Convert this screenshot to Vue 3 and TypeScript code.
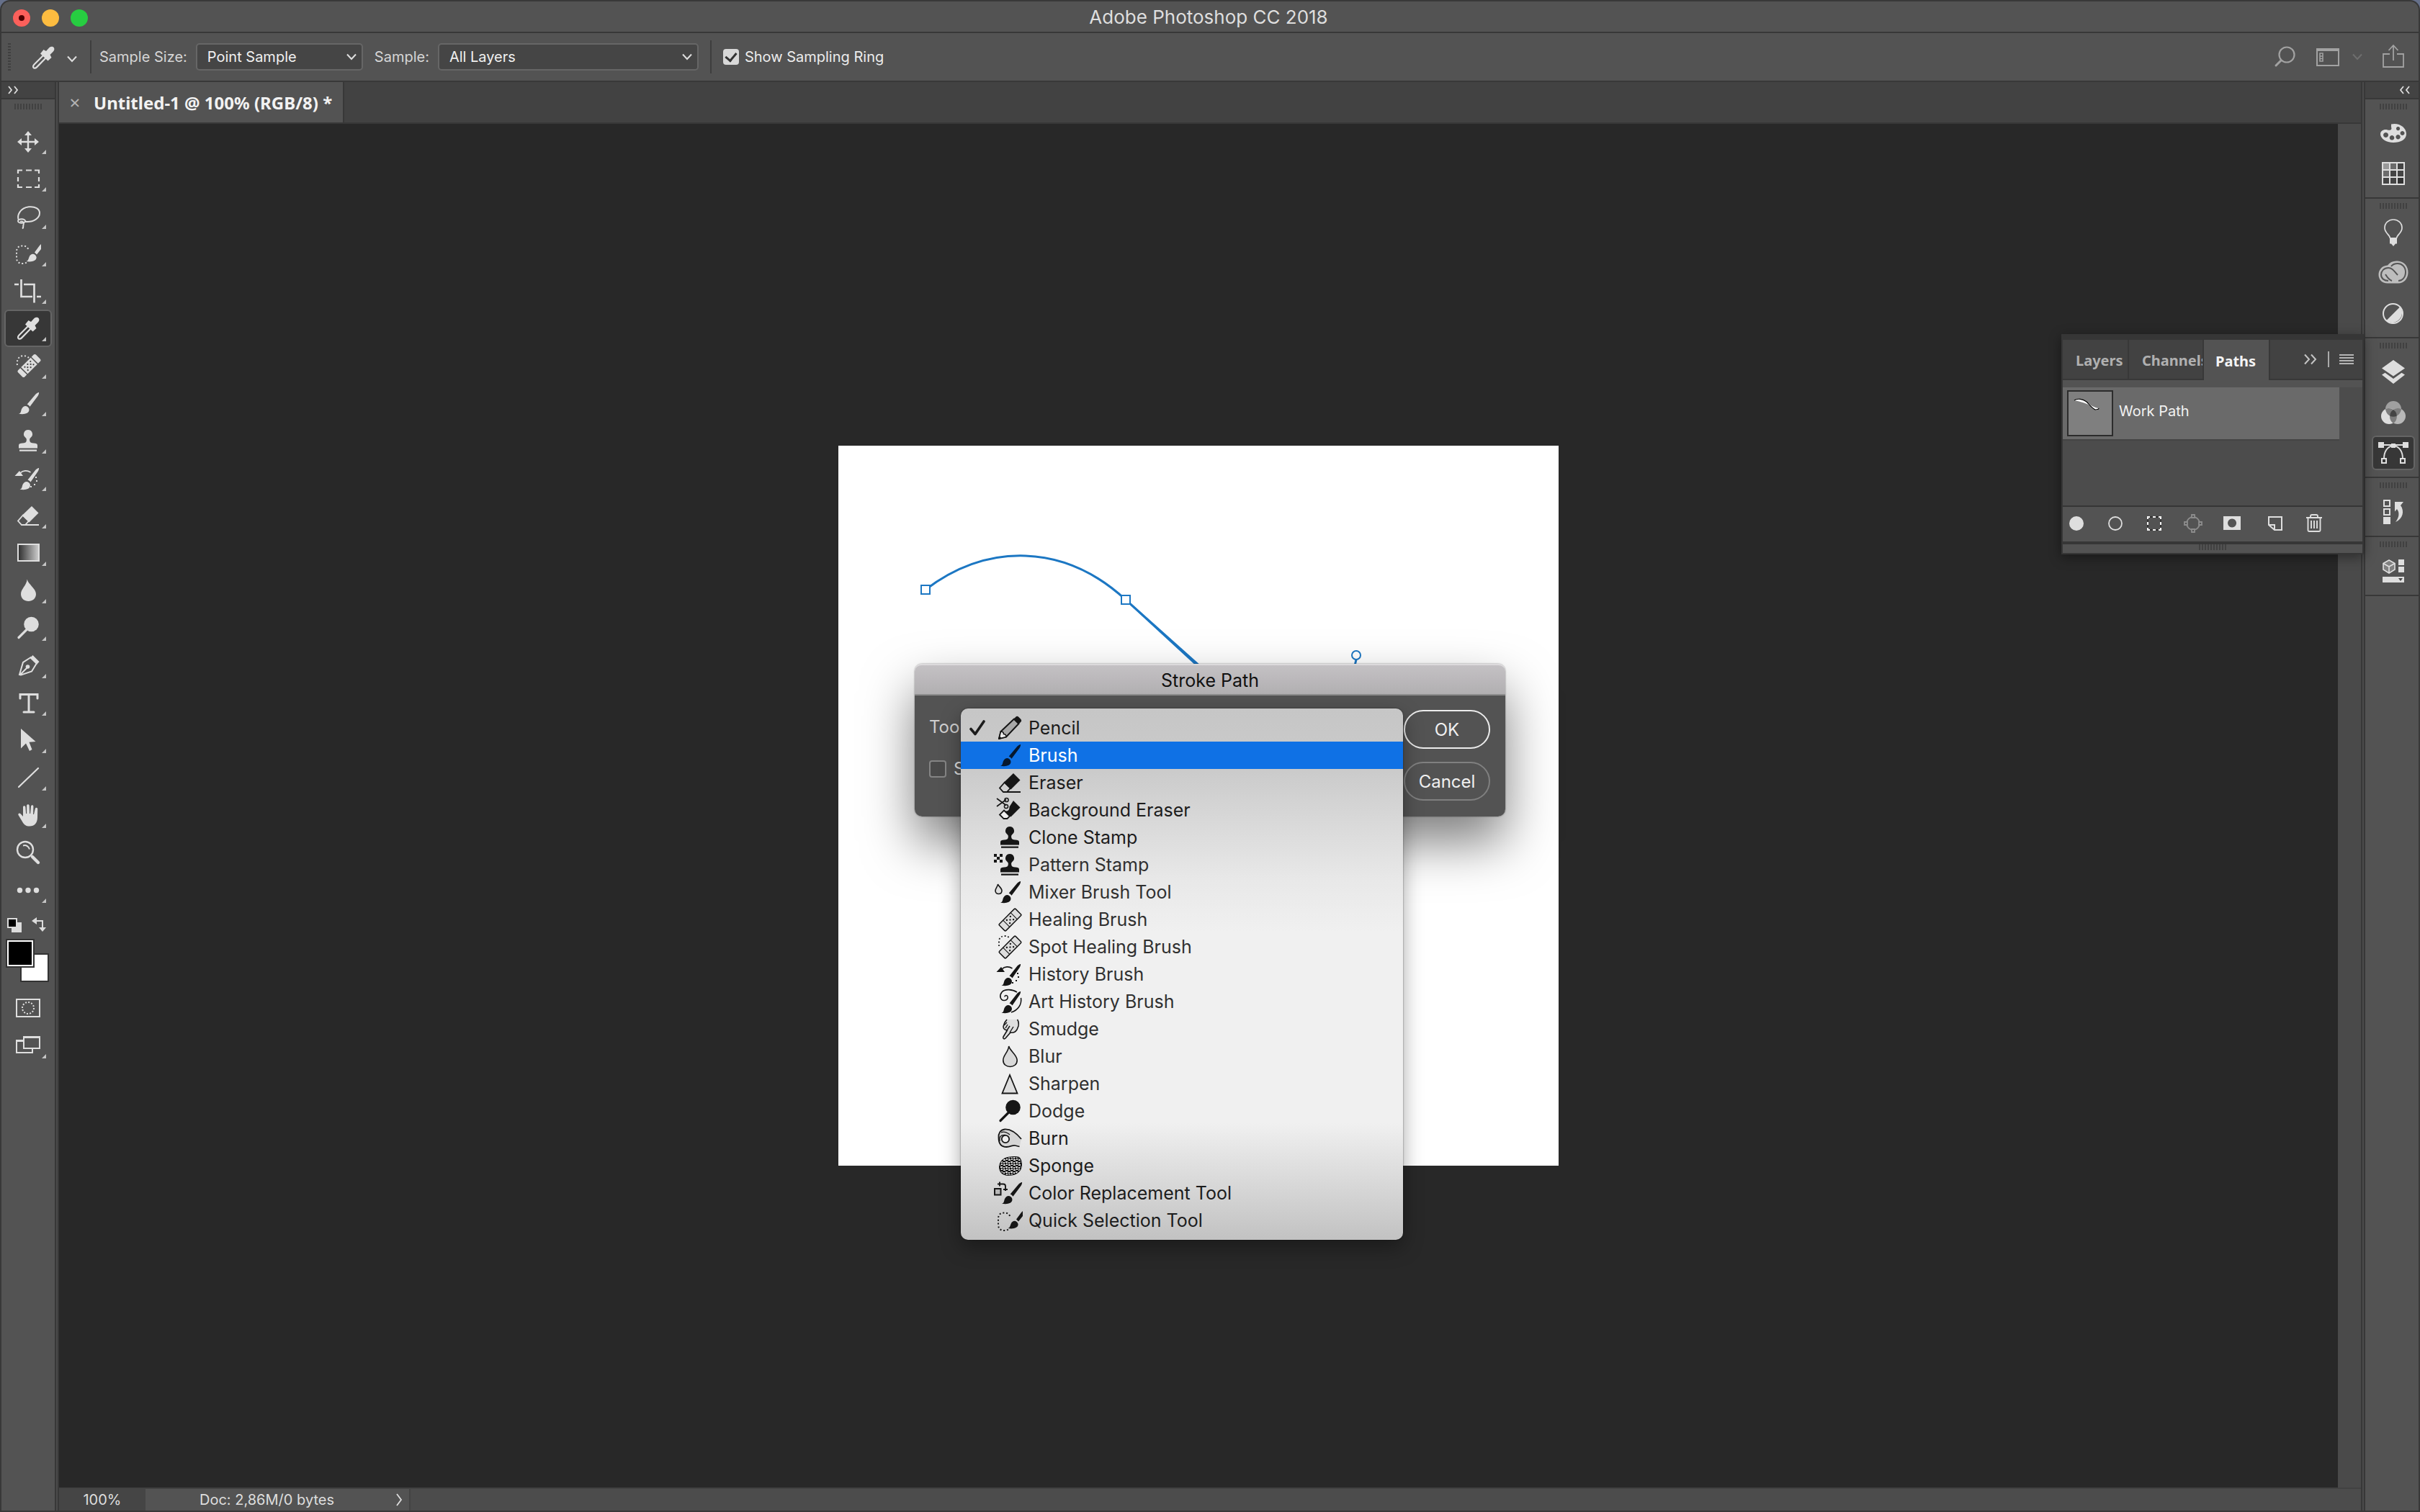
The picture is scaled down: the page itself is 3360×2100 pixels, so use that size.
<script setup lang="ts">
import { ref } from 'vue'

interface Tool {
  icon: string
  label: string
  more: boolean
}

interface StrokeTool {
  icon: string
  label: string
}

const tools: Tool[] = [
  { icon: 'move', label: 'Move', more: true },
  { icon: 'marquee', label: 'Rectangular Marquee', more: true },
  { icon: 'lasso', label: 'Lasso', more: true },
  { icon: 'quick', label: 'Quick Selection', more: true },
  { icon: 'crop', label: 'Crop', more: true },
  { icon: 'eyedropper', label: 'Eyedropper', more: true },
  { icon: 'spot-heal-solid', label: 'Spot Healing Brush', more: true },
  { icon: 'brush', label: 'Brush', more: true },
  { icon: 'stamp', label: 'Clone Stamp', more: true },
  { icon: 'history-brush', label: 'History Brush', more: true },
  { icon: 'eraser', label: 'Eraser', more: true },
  { icon: 'gradient', label: 'Gradient', more: true },
  { icon: 'drop-solid', label: 'Blur', more: true },
  { icon: 'dodge', label: 'Dodge', more: true },
  { icon: 'pen', label: 'Pen', more: true },
  { icon: 'type', label: 'Horizontal Type', more: true },
  { icon: 'arrow', label: 'Path Selection', more: true },
  { icon: 'line', label: 'Line', more: true },
  { icon: 'hand', label: 'Hand', more: true },
  { icon: 'zoom', label: 'Zoom', more: false },
  { icon: 'dots', label: 'Edit Toolbar', more: true },
]

const strokeTools: StrokeTool[] = [
  { icon: 'pencil', label: 'Pencil' },
  { icon: 'brush', label: 'Brush' },
  { icon: 'eraser', label: 'Eraser' },
  { icon: 'bg-eraser', label: 'Background Eraser' },
  { icon: 'stamp', label: 'Clone Stamp' },
  { icon: 'pattern-stamp', label: 'Pattern Stamp' },
  { icon: 'mixer', label: 'Mixer Brush Tool' },
  { icon: 'heal', label: 'Healing Brush' },
  { icon: 'spot-heal', label: 'Spot Healing Brush' },
  { icon: 'history-brush', label: 'History Brush' },
  { icon: 'art-history', label: 'Art History Brush' },
  { icon: 'smudge', label: 'Smudge' },
  { icon: 'drop-outline', label: 'Blur' },
  { icon: 'sharpen', label: 'Sharpen' },
  { icon: 'dodge', label: 'Dodge' },
  { icon: 'burn', label: 'Burn' },
  { icon: 'sponge', label: 'Sponge' },
  { icon: 'color-replace', label: 'Color Replacement Tool' },
  { icon: 'quick', label: 'Quick Selection Tool' },
]

const dockGroups: string[][] = [
  ['palette', 'swatches'],
  ['bulb', 'cloud', 'adjust'],
  ['layers', 'channels', 'paths'],
  ['history'],
  ['properties'],
]

const footerIcons = ['fill', 'stroke', 'selection', 'work-path', 'mask', 'new', 'trash']

const activeTool = ref('eyedropper')
const activeDock = ref('paths')
const sampleSize = ref('Point Sample')
const sampleFrom = ref('All Layers')
const showRing = ref(true)
const simulate = ref(false)
const checkedTool = ref('Pencil')
const hoveredTool = ref('Brush')
</script>

<template>
  <svg class="defs" aria-hidden="true">
    <defs>
      <linearGradient id="g-tool"><stop offset="0" stop-color="#2c2c2c" /><stop offset="1" stop-color="#cfcfcf" /></linearGradient>
      <pattern id="p-sponge" width="7" height="7" patternUnits="userSpaceOnUse">
        <path d="M0 0h3v2H0zM4 1h2v2H4zM1 3h2v2H1zM4 4h3v2H4z" fill="#dcdcdc" />
      </pattern>
    </defs>
    <symbol id="move" viewBox="0 0 40 40">
      <path d="M20 10v22M9 21h22" stroke="currentColor" stroke-width="2.400" />
      <path d="M20 6l5 6H15zM20 36l5-6H15zM5 21l6-5v10zM35 21l-6-5v10z" fill="currentColor" />
    </symbol>
    <symbol id="marquee" viewBox="0 0 40 40">
      <path d="M6 13V8.500h6M17 8.500h8M29 8.500h6V13M35 18v6M35 28v4h-6M25 32h-8M12 32H6v-4M6 24v-6" fill="none" stroke="currentColor" stroke-width="2.200" />
    </symbol>
    <symbol id="lasso" viewBox="0 0 40 40">
      <g fill="none" stroke="currentColor" stroke-width="2">
        <path d="M7 26C4 19 9 9 21 7.300c9-1 15 3 15 8.700 0 7-8 12-17 12-2 0-3-.2-4-.5" />
        <ellipse cx="11" cy="27" rx="5" ry="2.800" />
        <path d="M9 28c4-2 6 2 4.500 4.500-1 2 1 3-1.500 5" />
      </g>
    </symbol>
    <symbol id="quick" viewBox="0 0 40 40">
      <path d="M20 14C19 10 15 9.500 12 9.500 6 9.500 4 13 4 18v8c0 5 3 8 8 8 3 0 6-1 8-3" fill="none" stroke="currentColor" stroke-width="2" stroke-dasharray="2 2.800" />
      <path d="M17.500 31c3-1 3-4 4.200-6.500 1.800-3.800 5.300-4.600 8-2.500 2.800 2.200 2.500 6-.7 7.800-3 1.700-7 1.900-11.500 1.200zM29 18.500L36 9l2-2v7l-6 7.500z" fill="currentColor" />
    </symbol>
    <symbol id="crop" viewBox="0 0 40 40">
      <path d="M1 11h6M10.500 4v24H26M32 28h6M14 11h14.500v25.500" fill="none" stroke="currentColor" stroke-width="2.700" />
    </symbol>
    <symbol id="eyedropper" viewBox="0 0 40 40">
      <path d="M20.500 16.500L7.500 29.500c-1.500 1.500-2 3.500-.8 4.600 1.200 1 3 .5 4.500-1L24 20" fill="none" stroke="currentColor" stroke-width="2.200" />
      <path d="M16 14.500l4.500-5.500 3.500 2 4.500-5C31 4 34 4.500 35 6.500c1 2 0 4-1.500 5.500L29.500 16l2 4-5 4.500z" fill="currentColor" />
    </symbol>
    <symbol id="spot-heal-solid" viewBox="0 0 40 40">
      <path d="M5 19c-1-6 1-12 8-13 3 0 6 1 8 3" fill="none" stroke="currentColor" stroke-width="2" stroke-dasharray="2 2.800" />
      <g transform="rotate(-45 21.500 20)">
        <path d="M10.500 13.500H6.500a2.500 2.500 0 0 0-2.500 2.500v8a2.500 2.500 0 0 0 2.500 2.500h4zM32.500 13.500h4a2.500 2.500 0 0 1 2.500 2.500v8a2.500 2.500 0 0 1-2.500 2.500h-4zM12 13.500h19v13H12z" fill="currentColor" />
        <g fill="#444"><circle cx="16" cy="17" r="1.100" /><circle cx="21.500" cy="17" r="1.100" /><circle cx="27" cy="17" r="1.100" /><circle cx="18.500" cy="20" r="1.100" /><circle cx="24.500" cy="20" r="1.100" /><circle cx="16" cy="23" r="1.100" /><circle cx="21.500" cy="23" r="1.100" /><circle cx="27" cy="23" r="1.100" /></g>
      </g>
    </symbol>
    <symbol id="brush" viewBox="0 0 40 40">
      <path d="M7 34.800c3.500-1 2.800-4 4.200-7 1.800-4 5.500-5 8.300-2.600 3 2.500 2.500 6.600-1 8.600-3 1.600-7 1.500-11.500 1zM18.700 21.500L30.500 7.500C32.500 5.500 34.500 4.600 35 5c.4.500-.2 3-1.500 5L22.500 24.800c-1-1.500-2.300-2.600-3.800-3.300z" fill="currentColor" />
    </symbol>
    <symbol id="stamp" viewBox="0 0 40 40">
      <path d="M20 5a6 6 0 0 1 3.600 10.800c-1.400 1.200-1.600 2.200-1.400 4 .1 2 1.300 3.200 3.300 3.400l4.500.6c2.400.4 3 1.500 3 3.200v3.500H7V27c0-1.700.6-2.800 3-3.200l4.500-.6c2-.2 3.200-1.400 3.300-3.400.2-1.800 0-2.800-1.400-4A6 6 0 0 1 20 5zM8 32.600h24v2.200H8z" fill="currentColor" />
    </symbol>
    <symbol id="history-brush" viewBox="0 0 40 40">
      <path d="M8.500 35.800c3.500-1 2.800-4 4.200-7 1.800-4 5.500-5 8.300-2.600 3 2.500 2.500 6.600-1 8.600-3 1.600-7 1.500-11.500 1zM19.500 22.500L30.500 8.500C32.500 6.500 34.500 5.600 35 6c.4.500-.2 3-1.500 5L23.500 25.500c-1-1.500-2.300-2.300-4-3zM1.500 17L8 10l5 7z" fill="currentColor" />
      <path d="M9 13c4-4 10-4 14.500-1" fill="none" stroke="currentColor" stroke-width="1.600" />
      <path d="M32 18v2h-2v-2zM33 23v2h-2v-2zM30 28v2h-2v-2zM25 31v2h-2v-2z" fill="currentColor" />
    </symbol>
    <symbol id="eraser" viewBox="0 0 40 40">
      <path d="M25 7l9.500 9.500-13 13-10-9.500z" fill="currentColor" />
      <path d="M13 19.500l8 8-5 5.500h-5L6 27.500z" fill="none" stroke="currentColor" stroke-width="1.800" />
      <path d="M11 33h24" stroke="currentColor" stroke-width="2" />
    </symbol>
    <symbol id="gradient" viewBox="0 0 40 40">
      <rect x="6" y="8" width="29" height="23" fill="url(#g-tool)" stroke="currentColor" stroke-width="2" />
    </symbol>
    <symbol id="drop-solid" viewBox="0 0 40 40">
      <path d="M18.700 4.500c1 6.500 12.300 13 12.300 20.500 0 6.500-5 10-10.500 10S10 31.500 10 25c0-7 8-12 8.700-20.500z" fill="currentColor" />
    </symbol>
    <symbol id="drop-outline" viewBox="0 0 40 40">
      <path d="M18.700 6c1 6 11.500 12 11.500 19.500 0 6-4.700 9-9.700 9s-9.700-3-9.700-9c0-7 7.400-11.500 7.900-19.500z" fill="#d9d9d9" stroke="currentColor" stroke-width="1.600" />
    </symbol>
    <symbol id="dodge" viewBox="0 0 40 40">
      <circle cx="24.500" cy="15" r="10.300" fill="currentColor" />
      <path d="M7 33.500L18 22.500" stroke="currentColor" stroke-width="3.200" stroke-linecap="round" />
    </symbol>
    <symbol id="pen" viewBox="0 0 40 40">
      <path d="M24.500 8.500L13 16 8 33l2 .5 15-5 7-11.500M9 33l9.500-9.500" fill="none" stroke="currentColor" stroke-width="2" />
      <circle cx="19.500" cy="22" r="2.800" fill="currentColor" />
      <path d="M26.500 6l9 9-3.500 4L22.500 10z" fill="currentColor" />
    </symbol>
    <symbol id="type" viewBox="0 0 40 40">
      <path d="M9 14V8.500h24V14M21 8.500V33M14 33h14" fill="none" stroke="currentColor" stroke-width="3" stroke-linecap="round" />
    </symbol>
    <symbol id="arrow" viewBox="0 0 40 40">
      <path d="M10 4l20.500 18-9 .8 4 10.200-3.500 2-5-10.500-7 7z" fill="currentColor" />
    </symbol>
    <symbol id="line" viewBox="0 0 40 40">
      <path d="M7 33L34 7" stroke="currentColor" stroke-width="2.200" stroke-linecap="round" />
    </symbol>
    <symbol id="hand" viewBox="0 0 40 40">
      <path d="M13 22V9c0-2.500 3.200-2.500 3.400 0l.7 9h1V7c0-2.500 3.400-2.500 3.600 0l.4 11h1l.9-10c.3-2.300 3.300-2.200 3.400 0l-.3 11h.9l1.900-8c.6-2 3.400-1.500 3.300.7L33 23c0 8-4 12.500-11 12.500-5 0-7.500-2-9.500-5.500L6.500 20c-.8-2 1.300-3.300 2.800-2z" fill="currentColor" />
    </symbol>
    <symbol id="zoom" viewBox="0 0 40 40">
      <g fill="none" stroke="currentColor"><circle cx="16" cy="16" r="11" stroke-width="2.400" /><path d="M13 10.500c4.500-1.500 8 1.500 9 5" stroke-width="2" /><path d="M26 26l8 8" stroke-width="4.400" stroke-linecap="round" /></g>
    </symbol>
    <symbol id="dots" viewBox="0 0 40 40">
      <g fill="currentColor"><circle cx="8.500" cy="20.500" r="3.700" /><circle cx="20" cy="20.500" r="3.700" /><circle cx="31.500" cy="20.500" r="3.700" /></g>
    </symbol>
    <symbol id="pencil" viewBox="0 0 40 40">
      <path d="M5 35l2.500-10L26 7.500l6.500 6.500L15 32.500z" fill="#a8a8a8" stroke="currentColor" stroke-width="2" stroke-linejoin="round" />
      <path d="M5 35l2.500-10c3 0 4 1.500 4 3.500 2 0 3.500 1.500 3.500 4z" fill="#eee" stroke="currentColor" stroke-width="1.600" />
      <path d="M25 8l3.500-3.500c1-1 2.500-1 4 .5l2.500 2.500c1.500 1.500 1.500 3 .5 4L32 15zM4 36l1.500-5 3.500 3.500z" fill="currentColor" />
    </symbol>
    <symbol id="bg-eraser" viewBox="0 0 40 40">
      <path d="M25 7l9.500 9.500-13 13-8-8c5 0 6-2 6-6z" fill="currentColor" />
      <path d="M12 20.500l8 8-3.500 3.500h-5L6 26.500z" fill="#efefef" stroke="currentColor" stroke-width="1.800" />
      <path d="M2 4l13 9.500M2 15l13-9.500" stroke="currentColor" stroke-width="1.600" />
      <circle cx="15.500" cy="6" r="2.600" fill="none" stroke="currentColor" stroke-width="1.500" />
      <circle cx="15" cy="15" r="2.600" fill="none" stroke="currentColor" stroke-width="1.500" />
    </symbol>
    <symbol id="pattern-stamp" viewBox="0 0 40 40">
      <use href="#stamp" width="40" height="40" />
      <path d="M-2 5h4v4h-4zM6 5h4v4H6zM2 9h4v4H2zM-2 13h4v4h-4zM6 13h4v4H6z" fill="currentColor" />
    </symbol>
    <symbol id="mixer" viewBox="0 0 40 40">
      <use href="#brush" width="40" height="40" />
      <path d="M3.500 9c1 3 5.500 5.500 5.500 9 0 3-2 4.500-4.500 4.500S0 21 0 18c0-3 3-5 3.500-9z" fill="#dedede" stroke="currentColor" stroke-width="1.600" />
    </symbol>
    <symbol id="heal" viewBox="0 0 40 40">
      <g transform="rotate(-45 20.500 20.500)">
        <rect x="4.500" y="14" width="32" height="13" rx="1.500" fill="#dedede" stroke="currentColor" stroke-width="1.500" />
        <path d="M13 14v13M28 14v13" stroke="currentColor" stroke-width="1" />
        <g fill="currentColor"><circle cx="17" cy="17.500" r="1.200" /><circle cx="20.500" cy="20.500" r="1.200" /><circle cx="24" cy="17.500" r="1.200" /><circle cx="17" cy="23.500" r="1.200" /><circle cx="24" cy="23.500" r="1.200" /></g>
      </g>
    </symbol>
    <symbol id="spot-heal" viewBox="0 0 40 40">
      <use href="#heal" width="40" height="40" />
      <path d="M5 19V11c1-4 4-6 8-6 3 0 5 1 7 3" fill="none" stroke="currentColor" stroke-width="1.800" stroke-dasharray="1.800 2.800" />
    </symbol>
    <symbol id="art-history" viewBox="0 0 40 40">
      <path d="M8.500 35.800c3.500-1 2.800-4 4.200-7 1.800-4 5.500-5 8.300-2.600 3 2.500 2.500 6.600-1 8.600-3 1.600-7 1.500-11.500 1zM19.500 22.500L30.500 8.500C32.500 6.500 34.500 5.600 35 6c.4.500-.2 3-1.500 5L23.500 25.500c-1-1.500-2.300-2.300-4-3z" fill="currentColor" />
      <path d="M30 7C24 3 13 2 9 7c-4 5-2 11 3 11.500 4 .3 6-3 5-5.500-1-2-4-2-4 .5M35.500 15c1.500 9-4 17-13.500 20" fill="none" stroke="currentColor" stroke-width="1.600" />
    </symbol>
    <symbol id="smudge" viewBox="0 0 40 40">
      <path d="M16 7l-3 4-1.500 4c-1.500 3 .5 6 3 6.500l2 .5-5.500 9c-1 2 1 4 3 2l7-8c4 1 7-1 9-4l2-5c.6-3 .5-6-1.500-9" fill="#dedede" stroke="currentColor" stroke-width="1.600" stroke-linejoin="round" />
      <path d="M16 22l4-6M14 19l3-5M12 15l4-4M20 25l5-8" stroke="currentColor" stroke-width="1.400" />
    </symbol>
    <symbol id="sharpen" viewBox="0 0 40 40">
      <path d="M20 8l10.500 25.500H9.500z" fill="#dedede" stroke="currentColor" stroke-width="1.800" />
    </symbol>
    <symbol id="burn" viewBox="0 0 40 40">
      <path d="M36 21C31 15 22 7 13 7.500 7 8 4 13 4.500 19c0 8 3 13 11 13 6 0 8-3 12-2l6 1.500" fill="#d6d6d6" stroke="currentColor" stroke-width="1.800" />
      <circle cx="14" cy="21" r="5.200" fill="#efefef" stroke="currentColor" stroke-width="1.800" />
      <path d="M6 24c-1-6 1-9 8-8.500M8 12c4-2 9 0 12 3" fill="none" stroke="currentColor" stroke-width="1.300" />
    </symbol>
    <symbol id="sponge" viewBox="0 0 40 40">
      <path d="M12 10c4-3 17-4 21-2 4 3 5 11 3 16-2 6-9 10-18 10-8 0-13-5-13-12 0-5 3-10 7-12z" fill="currentColor" />
      <path d="M12 11c4-3 16-4 20-2 4 3 5 10 3 15-2 5-9 9-17 9-7 0-12-5-12-11 0-5 3-9 6-11z" fill="url(#p-sponge)" />
    </symbol>
    <symbol id="color-replace" viewBox="0 0 40 40">
      <use href="#brush" x="2" width="40" height="40" />
      <path d="M-1 14h8.500v8.500H-1z" fill="#b8b8b8" stroke="currentColor" stroke-width="2" />
      <path d="M3 7.500h8c2 0 3 1 3 3V17M6 4.500v6M11 15h6" fill="none" stroke="currentColor" stroke-width="1.900" />
    </symbol>
    <symbol id="palette" viewBox="0 0 40 40">
      <path fill-rule="evenodd" d="M17 7.500C28 5 38 12 38 21c0 8-8 12-18 12S2 27.500 2 21c0-4 5-7 10-5.500 4 1 6.500-.5 5-4zM9.500 19a3.500 3.500 0 1 0 .1 0zM18 23a3.300 3.300 0 1 0 .1 0zM26.500 22a3.200 3.200 0 1 0 .1 0zM32.500 17a3 3 0 1 0 .1 0zM26.500 11a2.600 2.600 0 1 0 .1 0z" fill="currentColor" />
    </symbol>
    <symbol id="swatches" viewBox="0 0 40 40">
      <path d="M5 5h10v10H5z" fill="#999" /><path d="M15 5h10v10H15zM5 15h10v10H5z" fill="#6c6c6c" /><path d="M15 15h10v10H15zM25 5h10v20H25zM15 25h10v10H15zM5 25h10v10H5z" fill="#444" /><path d="M25 25h10v10H25z" fill="#333" />
      <path d="M5 5h30v30H5zM15 5v30M25 5v30M5 15h30M5 25h30" fill="none" stroke="currentColor" stroke-width="2" />
    </symbol>
    <symbol id="bulb" viewBox="0 0 40 40">
      <path d="M15.500 28c0-5-7.500-7-7.500-14.500C8 6.500 13.500 2 20 2s12 4.500 12 11.500C32 21 24.500 23 24.500 28" fill="none" stroke="currentColor" stroke-width="1.700" />
      <path d="M15 27h10v8.500h-2L20 39l-3-3.500h-2z" fill="currentColor" />
    </symbol>
    <symbol id="cloud" viewBox="0 0 40 40">
      <path d="M12 34.500C4 34.500-.5 29-.5 22.500S4 10 12 9.500C15 5 20 3 26 3.500 35 4 41 11 40.500 20S34 34.500 27 34.500z" fill="#bdbdbd" />
      <path d="M27 31C32 31 37 26.500 37 19S32 7 26 7c-4 0-7 1-9 4M13 31C7 31 3 27.500 3 22.500S7 13 13 13c5 0 7 3 13 10M18 31c-3-1-6-4-9-9" fill="none" stroke="#555" stroke-width="2" />
    </symbol>
    <symbol id="adjust" viewBox="0 0 40 40">
      <circle cx="19.500" cy="20.500" r="13.500" fill="none" stroke="currentColor" stroke-width="2" />
      <path d="M29.500 11A14 14 0 0 1 10 30.500z" fill="currentColor" />
    </symbol>
    <symbol id="layers" viewBox="0 0 40 40">
      <path d="M20 3l16 11.500L20 25.500 4 14.500zM4 23.500l4.500-2.800L20 29l11.500-8.300 4.500 2.800L20 36z" fill="currentColor" />
    </symbol>
    <symbol id="channels" viewBox="0 0 40 40">
      <circle cx="20" cy="15" r="11" fill="#a0a0a0" /><circle cx="14" cy="25" r="11" fill="#dedede" /><circle cx="26" cy="25" r="11" fill="#b8b8b8" />
      <path d="M9 15c4-2 8-1 11 1 3-2 7-3 11-1-1 7-5 10-11 11-6-1-10-4-11-11zM20 16c6 5 7 14 0 19-7-5-6-14 0-19z" fill="#7c7c7c" /><path d="M20 16c4 3 5 6 4.500 9-3 1-6 1-9 0-.5-3 .5-6 4.500-9z" fill="#444" />
    </symbol>
    <symbol id="paths" viewBox="0 0 40 40">
      <path d="M4 9h32M7 28c0-9 4-17 13-18 9 1 13 9 13 18" fill="none" stroke="currentColor" stroke-width="2" />
      <path d="M-1 5h8v8h-8zM33 5h8v8h-8zM17 7h6v6h-6z" fill="currentColor" />
      <path d="M4 28h6v6H4zM30 28h6v6h-6z" fill="#373737" stroke="currentColor" stroke-width="2" />
    </symbol>
    <symbol id="history" viewBox="0 0 40 40">
      <path d="M7 4h8v8H7zM7 16h8v8H7z" fill="none" stroke="currentColor" stroke-width="2" />
      <path d="M6 27h10v10H6zM22 6h12l-4 5c6 8 3 19-7 23 5-6 6-13 2-18l-3 3.500z" fill="currentColor" />
    </symbol>
    <symbol id="properties" viewBox="0 0 40 40">
      <path d="M14 5l8 4.500V18l-8 5-8-5V9.500z" fill="#808080" stroke="currentColor" stroke-width="1.600" /><path d="M6 9.500l8 4.500 8-4.500M14 14v9" fill="none" stroke="currentColor" stroke-width="1.600" />
      <path d="M27 4h8v8h-8zM27 14h8v8h-8zM5 28h30v8H5z" fill="currentColor" /><path d="M27 30h6l-3 4z" fill="#444" />
    </symbol>
    <symbol id="fill" viewBox="0 0 38 38"><circle cx="19" cy="18" r="10" fill="currentColor" /></symbol>
    <symbol id="stroke" viewBox="0 0 38 38"><circle cx="19" cy="18" r="9" fill="none" stroke="currentColor" stroke-width="1.800" /></symbol>
    <symbol id="selection" viewBox="0 0 38 38">
      <path d="M10 9h18v18H10z" fill="none" stroke="#333" stroke-width="2" />
      <path d="M10 12V9h3M17 9h4M25 9h3v3M28 16v4M28 24v3h-3M21 27h-4M13 27h-3v-3M10 20v-4" fill="none" stroke="#f4f4f4" stroke-width="2" />
    </symbol>
    <symbol id="work-path" viewBox="0 0 38 38">
      <g fill="none" stroke="#8c8c8c" stroke-width="1.800"><circle cx="19" cy="18" r="9" /><g fill="#535353"><path d="M17 6h4v4h-4zM17 26h4v4h-4zM7 16h4v4H7zM27 16h4v4h-4z" /></g></g>
    </symbol>
    <symbol id="mask" viewBox="0 0 38 38"><path fill-rule="evenodd" d="M7 8h24v19H7zM19 11.500a6 6 0 1 0 .1 0z" fill="currentColor" /></symbol>
    <symbol id="new" viewBox="0 0 38 38">
      <path d="M10 20V9h18v18H18zM10 20h8v7" fill="none" stroke="currentColor" stroke-width="2" />
    </symbol>
    <symbol id="trash" viewBox="0 0 38 38">
      <path d="M8 10h22M14 9V8c0-1 1-2 2-2h6c1 0 2 1 2 2v1M10.500 10v17.500c0 1 .5 1.500 1.500 1.500h14c1 0 1.500-.5 1.500-1.500V10M15 14v11M19 14v11M23 14v11" fill="none" stroke="currentColor" stroke-width="1.900" />
    </symbol>
    <symbol id="chevron" viewBox="0 0 16 10"><path d="M2 1.500l6 6.500 6-6.500" fill="none" stroke="currentColor" stroke-width="2" /></symbol>
  </svg>

  <div class="desk">
    <div class="window">
      <header class="titlebar">
        <div class="lights">
          <button class="light close" aria-label="Close"></button>
          <button class="light min" aria-label="Minimize"></button>
          <button class="light max" aria-label="Zoom window"></button>
        </div>
        <h1>Adobe Photoshop CC 2018</h1>
      </header>

      <div class="options">
        <span class="vgrip"></span>
        <button class="current" aria-label="Current tool">
          <svg class="i40"><use href="#eyedropper" /></svg>
          <svg class="chev"><use href="#chevron" /></svg>
        </button>
        <span class="rule"></span>
        <label for="size">Sample Size:</label>
        <span class="pick narrow">
          <select id="size" v-model="sampleSize"><option>Point Sample</option></select>
          <svg class="chev"><use href="#chevron" /></svg>
        </span>
        <label for="from" class="second">Sample:</label>
        <span class="pick wide">
          <select id="from" v-model="sampleFrom"><option>All Layers</option></select>
          <svg class="chev"><use href="#chevron" /></svg>
        </span>
        <span class="rule"></span>
        <label class="ring"><input v-model="showRing" type="checkbox" />Show Sampling Ring</label>
        <div class="right-tools">
          <button aria-label="Search"><svg width="32" height="32" viewBox="0 0 32 32"><g fill="none" stroke="currentColor"><circle cx="18" cy="13" r="10.500" stroke-width="2.200" /><path d="M10 21l-7 7" stroke-width="3" stroke-linecap="round" /></g></svg></button>
          <button aria-label="Workspace" class="workspace"><svg width="34" height="32" viewBox="0 0 34 32"><path d="M2 5h30v23H2z" fill="none" stroke="currentColor" stroke-width="2" /><path d="M1 4h32v4H1z" fill="currentColor" /><path d="M6 11h4v11H6zM6 15h4M6 18.500h4" fill="none" stroke="currentColor" stroke-width="1.600" /></svg><svg class="chev dim"><use href="#chevron" /></svg></button>
          <button aria-label="Share"><svg width="32" height="38" viewBox="0 0 32 38"><path d="M11 15H2v18h28V15h-9M16 24V3M9.500 10L16 3l6.500 7" fill="none" stroke="currentColor" stroke-width="1.800" /></svg></button>
        </div>
      </div>

      <div class="main">
        <aside class="toolbar">
          <button class="expand" aria-label="Expand toolbar"><svg width="16" height="12" viewBox="0 0 16 12"><path d="M2 1l4 5-4 5M10 1l4 5-4 5" fill="none" stroke="currentColor" stroke-width="1.800" /></svg></button>
          <span class="hgrip"></span>
          <nav class="tools">
            <button v-for="t in tools" :key="t.icon" class="tool" :class="{ on: t.icon === activeTool }" :aria-label="t.label" @click="activeTool = t.icon">
              <svg class="i40"><use :href="'#' + t.icon" /></svg>
              <i v-if="t.more" class="corner"></i>
            </button>
          </nav>
          <svg class="colors" width="74" height="104" viewBox="0 0 74 104">
            <path d="M14 19h14v14H14z" fill="#dcdcdc" />
            <path d="M9 14h12v12H9z" fill="#000" stroke="#dcdcdc" stroke-width="2" />
            <path d="M46 17h11v11" fill="none" stroke="#dcdcdc" stroke-width="2" />
            <path d="M42 17l7-5v10zM57 32l-5-6h10z" fill="#dcdcdc" />
            <path d="M27 63h38v38H27z" fill="#fff" stroke="#333" stroke-width="2" />
            <path d="M7 43h38v38H7z" fill="#fff" stroke="#333" stroke-width="2" />
            <path d="M10 46h32v32H10z" />
          </svg>
          <button class="tool" aria-label="Quick Mask"><svg class="i40" viewBox="0 0 40 40"><path d="M4 8h32v24H4z" fill="none" stroke="currentColor" stroke-width="2" /><circle cx="20" cy="20" r="8" fill="none" stroke="currentColor" stroke-width="2" stroke-dasharray="2 2.180" /></svg></button>
          <button class="tool" aria-label="Screen Mode"><svg class="i40" viewBox="0 0 40 40"><path d="M14 13H4v17h22v-5M14 8h22v16H14z" fill="none" stroke="currentColor" stroke-width="2" /><path d="M3 12h11v3H3zM13 7h24v3H13z" fill="currentColor" /></svg><i class="corner"></i></button>
        </aside>

        <section class="document">
          <div class="tabs">
            <div class="tab"><button aria-label="Close document">×</button>Untitled-1 @ 100% (RGB/8) *</div>
          </div>
          <div class="view">
            <div class="stage">
              <svg class="artboard" viewBox="0 0 1000 1000">
                <path d="M0 0h1000v1000H0z" fill="#fff" />
                <g fill="none" stroke="#1c77c3" stroke-width="3">
                  <path d="M121 200C207 135 313 135 399 214L499 306" />
                  <path d="M399 214L503 307M719 297L716 310" />
                </g>
                <g fill="#fff" stroke="#1c77c3" stroke-width="2">
                  <path d="M115 194h12v12h-12zM393 208h12v12h-12z" />
                  <circle cx="719" cy="291" r="6" />
                </g>
              </svg>
            </div>
            <div class="vscroll"></div>
          </div>
          <footer class="status">
            <span class="zoomlevel">100%</span>
            <button class="docinfo"><span>Doc: 2,86M/0 bytes</span><svg width="10" height="20" viewBox="0 0 10 20"><path d="M2 2l6 8-6 8" fill="none" stroke="currentColor" stroke-width="1.800" /></svg></button>
            <span class="hscroll"></span>
          </footer>
        </section>

        <aside class="dock">
          <button class="expand end" aria-label="Expand panels"><svg width="16" height="12" viewBox="0 0 16 12"><path d="M6 1L2 6l4 5M14 1l-4 5 4 5" fill="none" stroke="currentColor" stroke-width="1.800" /></svg></button>
          <div v-for="(group, gi) in dockGroups" :key="gi" class="group">
            <span class="hgrip"></span>
            <button v-for="name in group" :key="name" class="dock-cell" :class="{ on: name === activeDock }" :aria-label="name" @click="activeDock = name">
              <svg class="i40"><use :href="'#' + name" /></svg>
            </button>
          </div>
        </aside>
      </div>
    </div>

    <section class="panel">
      <div class="panel-tabs">
        <button>Layers</button>
        <button class="mid">Channels</button>
        <button class="on">Paths</button>
        <div class="panel-menu">
          <svg width="20" height="16" viewBox="0 0 20 16"><path d="M2 1.500L8 8l-6 6.500M11 1.500L17 8l-6 6.500" fill="none" stroke="#c4c4c4" stroke-width="2" /></svg>
          <i></i>
          <svg width="20" height="14" viewBox="0 0 20 14"><path d="M0 1h20M0 5h20M0 9h20M0 13h20" stroke="#b4b4b4" stroke-width="2" /></svg>
        </div>
      </div>
      <div class="panel-list">
        <div class="path-row">
          <svg width="64" height="64" viewBox="0 0 64 64"><path d="M1 1h62v62H1z" fill="#7f7f7f" stroke="#2c2c2c" stroke-width="2" /><path d="M10 14c4-3 12-2 17 2 4 4 8 7 16 9l-1 3c-4-1-6-3-9-6-6-4-14-6-23-8z" fill="#fff" /><path d="M10 14c4-3 12-2 17 2 4 4 7 8 12 11 3 0 5 0 5-2" fill="none" stroke="#000" stroke-width="1.100" /></svg>
          <span>Work Path</span>
        </div>
      </div>
      <div class="panel-foot">
        <button v-for="f in footerIcons" :key="f" :class="f" :aria-label="f"><svg width="38" height="38"><use :href="'#' + f" /></svg></button>
      </div>
      <div class="panel-grip"><span class="hgrip"></span></div>
    </section>

    <section class="dialog" role="dialog" aria-labelledby="dlg-title">
      <h2 id="dlg-title">Stroke Path</h2>
      <div class="dialog-body">
        <div class="fields">
          <span class="field-label">Tool:</span>
          <label class="sim"><input v-model="simulate" type="checkbox" />Simulate Pressure</label>
        </div>
        <div class="actions">
          <button class="ok">OK</button>
          <button>Cancel</button>
        </div>
      </div>
      <ul class="menu" role="menu">
        <li v-for="s in strokeTools" :key="s.label">
          <button role="menuitem" :class="{ hover: s.label === hoveredTool }" @mouseenter="hoveredTool = s.label" @click="checkedTool = s.label">
            <span class="tick"><svg v-if="s.label === checkedTool" width="24" height="24" viewBox="0 0 24 24"><path d="M4 13.500l6 7L22 3" fill="none" stroke="currentColor" stroke-width="3.600" stroke-linecap="round" stroke-linejoin="round" /></svg></span>
            <svg class="i40"><use :href="'#' + s.icon" /></svg>
            <span class="menu-text">{{ s.label }}</span>
          </button>
        </li>
      </ul>
    </section>
  </div>
</template>

<style>
html,
body {
  margin: 0;
  background: #383838;
}
symbol {
  overflow: visible;
}
</style>

<style scoped>
* {
  box-sizing: border-box;
}
.defs {
  position: absolute;
  width: 0;
  height: 0;
}
button {
  padding: 0;
  border: 0;
  background: none;
  color: inherit;
  font: inherit;
}
svg {
  display: block;
  flex: none;
  overflow: visible;
}
.i40 {
  width: 40px;
  height: 40px;
}
.chev {
  width: 16px;
  height: 10px;
}
.desk {
  position: relative;
  height: 100vh;
  background: #66708a;
  font-family: Inter, "Liberation Sans", sans-serif;
  font-size: 20px;
  color: #dedede;
}
.window {
  display: flex;
  flex-direction: column;
  height: 100%;
  padding: 2px;
  border-radius: 14px 14px 0 0;
  background: #383838;
}
.titlebar {
  display: flex;
  align-items: center;
  height: 42px;
  padding: 4px 20px 0 16px;
  border-radius: 12px 12px 0 0;
  background: #535353;
}
.lights {
  display: flex;
  gap: 16px;
  flex: 1;
}
.titlebar::after {
  content: "";
  flex: 1;
}
.light {
  display: grid;
  place-items: center;
  width: 24px;
  height: 24px;
  border-radius: 50%;
}
.close {
  background: #fc605b;
}
.close::after {
  content: "";
  width: 8px;
  height: 8px;
  border-radius: 50%;
  background: #4d0000;
}
.min {
  background: #fdbc40;
}
.max {
  background: #27cd41;
}
h1 {
  margin: 0;
  padding-bottom: 2px;
  font-size: 26px;
  font-weight: 400;
  line-height: 30px;
}
.options {
  display: flex;
  align-items: center;
  height: 66px;
  margin: 2px 0;
  padding: 0 19px 0 9px;
  background: #535353;
}
.vgrip {
  width: 4px;
  height: 38px;
  background: repeating-linear-gradient(#3f3f3f 0 2px, transparent 2px 4px);
}
.current {
  display: flex;
  align-items: center;
  gap: 12px;
  margin: 0 17px 0 25px;
}
.current .i40 {
  margin-top: 2px;
}
.current .chev {
  margin-top: 6px;
}
.rule {
  width: 2px;
  height: 46px;
  margin-right: 11px;
  background: #3e3e3e;
}
.options label {
  margin-right: 12px;
  color: #d6d6d6;
}
.options .second {
  margin-left: 16px;
}
.pick {
  display: flex;
  align-items: center;
}
.pick.narrow {
  width: 232px;
}
.pick.wide {
  width: 362px;
  margin-right: 16px;
}
.pick select {
  width: 100%;
  height: 38px;
  padding: 0 14px;
  border: 2px solid #666;
  border-radius: 5px;
  background: #454545;
  color: #f0f0f0;
  font: inherit;
  appearance: none;
}
.pick .chev {
  margin-left: -24px;
  pointer-events: none;
}
.options .ring {
  display: flex;
  align-items: center;
  gap: 8px;
  margin-left: 5px;
  color: #ececec;
}
input[type="checkbox"] {
  display: grid;
  place-items: center;
  flex: none;
  margin: 0;
  appearance: none;
}
.ring input {
  width: 22px;
  height: 22px;
  border-radius: 4px;
  background: #d8d8d8;
}
.ring input:checked::after {
  content: "";
  width: 7px;
  height: 12px;
  margin-bottom: 3px;
  border: solid #333;
  border-width: 0 3px 3px 0;
  transform: rotate(40deg);
}
.right-tools {
  display: flex;
  align-items: center;
  gap: 26px;
  margin-left: auto;
  color: #a2a2a2;
}
.workspace {
  display: flex;
  align-items: center;
  gap: 16px;
}
.dim {
  color: #6e6e6e;
}
.main {
  display: flex;
  flex: 1;
  min-height: 0;
}
.toolbar {
  display: flex;
  flex-direction: column;
  width: 78px;
  border-right: 2px solid #4a4a4a;
  background: #535353;
  box-shadow: inset -2px 0 #383838;
}
.expand {
  display: flex;
  align-items: center;
  width: 74px;
  height: 24px;
  padding-left: 8px;
  border-bottom: 2px solid #383838;
  background: #434343;
}
.expand.end {
  justify-content: flex-end;
  padding-right: 11px;
}
.hgrip {
  display: block;
  width: 38px;
  height: 8px;
  background: repeating-linear-gradient(90deg, #414141 0 2px, transparent 2px 4px);
}
.toolbar .hgrip {
  flex: none;
  margin: 6px 18px 18px;
}
.tools {
  display: flex;
  flex-direction: column;
}
.tool {
  position: relative;
  display: grid;
  place-items: center;
  width: 66px;
  height: 52px;
  margin-left: 4px;
  border: 2px solid transparent;
  border-radius: 6px;
}
.tool.on {
  border-color: #656565;
  background: #373737;
}
.corner {
  position: absolute;
  right: 6px;
  bottom: 6px;
  border: solid transparent;
  border-width: 0 0 6px 6px;
  border-bottom-color: #c4c4c4;
}
.colors {
  margin-bottom: 8px;
}
.document {
  display: flex;
  flex: 1;
  flex-direction: column;
  min-width: 0;
  margin: 0 2px;
}
.tabs {
  display: flex;
  height: 56px;
  margin-bottom: 2px;
  background: #424242;
}
.tab {
  display: flex;
  align-items: center;
  width: 396px;
  padding-left: 14px;
  border-right: 2px solid #383838;
  background: #535353;
  color: #f2f2f2;
  font-family: "Noto Sans", sans-serif;
  font-size: 24px;
  font-weight: 700;
  white-space: nowrap;
}
.tab button {
  width: 16px;
  margin-right: 18px;
  color: #b4b4b4;
  font-weight: 400;
  font-size: 26px;
  line-height: 30px;
}
.view {
  display: flex;
  flex: 1;
  min-height: 0;
}
.stage {
  display: grid;
  flex: 1;
  place-items: center;
  background: #282828;
}
.artboard {
  width: 1000px;
  height: 1000px;
}
.vscroll {
  width: 32px;
  background: #4a4a4a;
}
.status {
  display: flex;
  height: 32px;
  border-top: 2px solid #424242;
}
.zoomlevel {
  display: grid;
  place-items: center;
  width: 120px;
  background: #454545;
}
.docinfo {
  display: flex;
  align-items: center;
  gap: 10px;
  width: 368px;
  padding-right: 9px;
  border-right: 2px solid #444;
  background: #535353;
}
.docinfo span {
  flex: 1;
}
.hscroll {
  flex: 1;
  background: #4c4c4c;
}
.dock {
  width: 78px;
  border-left: 2px solid #4a4a4a;
  background: #535353;
  box-shadow: inset 2px 0 #383838;
  padding-left: 2px;
}
.group {
  display: flex;
  flex-direction: column;
  align-items: center;
  padding: 6px 0 5px 4px;
  border-bottom: 2px solid #383838;
}
.group .hgrip {
  margin-bottom: 5px;
}
.dock-cell {
  display: grid;
  place-items: center;
  width: 60px;
  height: 48px;
  margin: 4px 0;
  border: 2px solid transparent;
  border-radius: 6px;
}
.dock-cell.on {
  border-color: #656565;
  background: #373737;
}
.panel {
  position: absolute;
  top: 464px;
  right: 78px;
  width: 420px;
  padding: 8px 2px 2px;
  background: #363636;
  box-shadow: 0 4px 16px rgba(0, 0, 0, 0.4);
}
.panel-tabs {
  display: flex;
  height: 56px;
  border-bottom: 2px solid #383838;
  background: #424242;
  font-family: "Noto Sans", sans-serif;
  font-weight: 700;
  color: #b0b0b0;
}
.panel-tabs button {
  width: 92px;
  overflow: hidden;
  padding: 2px 0 0 18px;
  border-right: 2px solid #383838;
  text-align: left;
}
.panel-tabs .mid {
  width: 104px;
}
.panel-tabs .on {
  height: 56px;
  padding-left: 16px;
  background: #535353;
  color: #f4f4f4;
}
.panel-menu {
  display: flex;
  flex: 1;
  align-items: center;
  justify-content: flex-end;
  gap: 14px;
  padding-right: 12px;
}
.panel-menu i {
  width: 2px;
  height: 22px;
  background: #aaa;
}
.panel-list {
  height: 174px;
  border-top: 10px solid #535353;
  background: #4c4c4c;
}
.path-row {
  display: flex;
  align-items: center;
  gap: 8px;
  height: 74px;
  margin-right: 32px;
  padding-left: 6px;
  border-bottom: 2px solid #444;
  background: #6a6a6a;
  color: #f2f2f2;
}
.path-row span {
  margin-bottom: 6px;
}
.panel-foot {
  display: flex;
  align-items: center;
  gap: 16px;
  height: 48px;
  margin-top: 2px;
  background: #535353;
}
.new {
  margin-left: 6px;
}
.panel-grip {
  display: grid;
  place-items: start center;
  height: 12px;
  margin-top: 4px;
  background: #535353;
}
.dialog {
  position: absolute;
  top: 922px;
  left: 50%;
  width: 820px;
  margin-left: -410px;
  border-radius: 10px;
  box-shadow: 0 0 2px rgba(0, 0, 0, 0.5), 0 36px 70px rgba(0, 0, 0, 0.5);
}
h2 {
  height: 44px;
  margin: 0;
  border-top: 2px solid #dcdadc;
  border-bottom: 2px solid #8c8c8c;
  border-radius: 10px 10px 0 0;
  background: linear-gradient(#c4c1c4, #b1afb1);
  color: #111;
  font-size: 25px;
  font-weight: 400;
  line-height: 42px;
  text-align: center;
}
.dialog-body {
  display: flex;
  justify-content: space-between;
  height: 168px;
  padding: 20px 21px 0 20px;
  border-radius: 0 0 10px 10px;
  background: #535353;
  font-size: 24px;
}
.fields {
  display: flex;
  flex-direction: column;
  gap: 26px;
  width: 48px;
  padding-top: 8px;
  overflow: hidden;
  line-height: 32px;
  white-space: nowrap;
}
.field-label {
  color: #cfcfcf;
}
.sim {
  display: flex;
  align-items: center;
  gap: 10px;
}
.sim input {
  width: 24px;
  height: 24px;
  border: 2px solid #858585;
  border-radius: 4px;
  background: #4a4a4a;
}
.actions {
  display: flex;
  flex-direction: column;
  gap: 18px;
}
.actions button {
  width: 120px;
  height: 54px;
  border: 2px solid #808080;
  border-radius: 27px;
  color: #f0f0f0;
}
.actions .ok {
  border-color: #ececec;
}
.menu {
  position: absolute;
  top: 62px;
  left: 64px;
  width: 614px;
  margin: 0;
  padding: 8px 0;
  border-radius: 10px;
  background: linear-gradient(#c6c6c6, #cbcbcb 12%, #e8e8e8 32%, #f0f0f0 42%, #f0f0f0 78%, #c2c2c2);
  box-shadow: 0 0 2px rgba(0, 0, 0, 0.6), 0 10px 28px rgba(0, 0, 0, 0.35);
  color: #1c1c1c;
  font-size: 25px;
  list-style: none;
}
.menu li:nth-child(n + 6):nth-child(-n + 15) {
  color: #303030;
}
.menu button {
  display: flex;
  align-items: center;
  width: 100%;
  height: 38px;
}
.menu .i40 {
  color: #161616;
}
.menu .hover {
  background: #0f71e5;
}
.menu .hover .i40 {
  color: #06182e;
}
.menu .hover .menu-text {
  color: #fff;
}
.tick {
  width: 48px;
  padding-left: 10px;
}
.menu-text {
  margin-left: 6px;
}
</style>
